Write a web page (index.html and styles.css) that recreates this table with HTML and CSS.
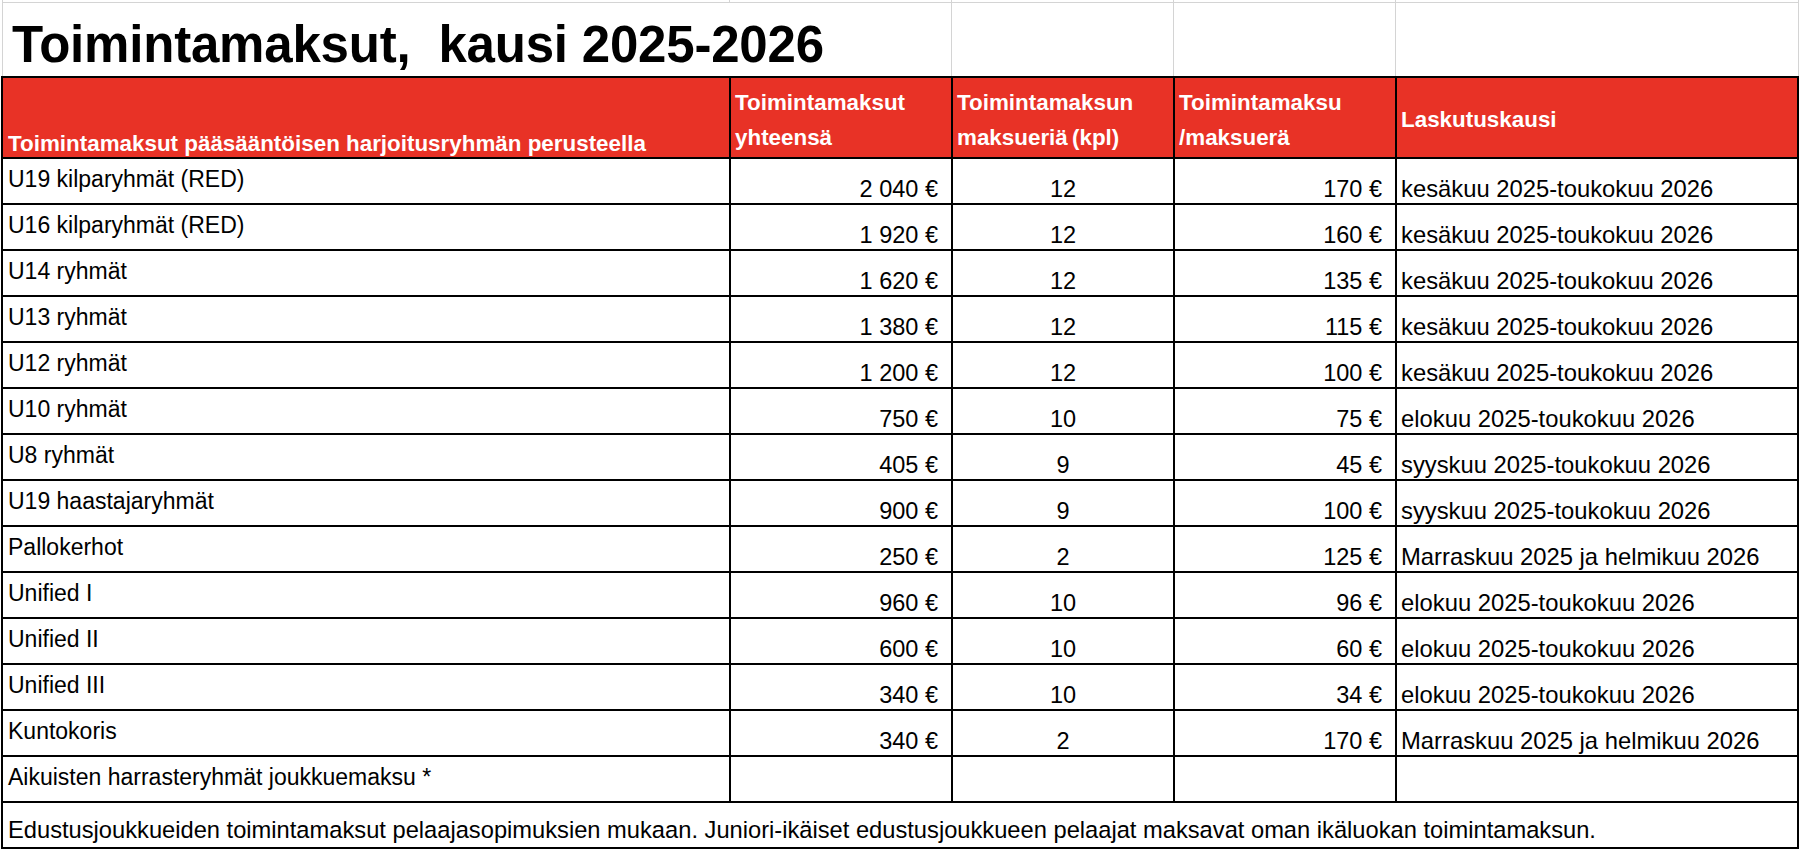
FILE: index.html
```html
<!DOCTYPE html>
<html lang="fi">
<head>
<meta charset="utf-8">
<title>Toimintamaksut, kausi 2025-2026</title>
<link rel="stylesheet" href="styles.css">
</head>
<body>
<div class="sheet">
  <div class="top">
    <div class="gc sliver"></div>
    <div class="gc sliver"></div>
    <div class="gc sliver"></div>
    <div class="gc sliver"></div>
    <div class="gc sliver last"></div>
    <div class="gc title"><h1>Toimintamaksut,&nbsp; kausi 2025-2026</h1></div>
    <div class="gc"></div>
    <div class="gc"></div>
    <div class="gc last"></div>
  </div>
  <div class="grid">
    <div class="c h h1c">Toimintamaksut pääsääntöisen harjoitusryhmän perusteella</div>
    <div class="c h h2">Toimintamaksut<br>yhteensä</div>
    <div class="c h h2">Toimintamaksun<br>maksueriä (kpl)</div>
    <div class="c h h2">Toimintamaksu<br>/maksuerä</div>
    <div class="c h h5">Laskutuskausi</div>

    <div class="c lbl">U19 kilparyhmät (RED)</div><div class="c num">2&nbsp;040&nbsp;€</div><div class="c cnt">12</div><div class="c num">170&nbsp;€</div><div class="c per">kesäkuu 2025-toukokuu 2026</div>
    <div class="c lbl">U16 kilparyhmät (RED)</div><div class="c num">1&nbsp;920&nbsp;€</div><div class="c cnt">12</div><div class="c num">160&nbsp;€</div><div class="c per">kesäkuu 2025-toukokuu 2026</div>
    <div class="c lbl">U14 ryhmät</div><div class="c num">1&nbsp;620&nbsp;€</div><div class="c cnt">12</div><div class="c num">135&nbsp;€</div><div class="c per">kesäkuu 2025-toukokuu 2026</div>
    <div class="c lbl">U13 ryhmät</div><div class="c num">1&nbsp;380&nbsp;€</div><div class="c cnt">12</div><div class="c num">115&nbsp;€</div><div class="c per">kesäkuu 2025-toukokuu 2026</div>
    <div class="c lbl">U12 ryhmät</div><div class="c num">1&nbsp;200&nbsp;€</div><div class="c cnt">12</div><div class="c num">100&nbsp;€</div><div class="c per">kesäkuu 2025-toukokuu 2026</div>
    <div class="c lbl">U10 ryhmät</div><div class="c num">750&nbsp;€</div><div class="c cnt">10</div><div class="c num">75&nbsp;€</div><div class="c per">elokuu 2025-toukokuu 2026</div>
    <div class="c lbl">U8 ryhmät</div><div class="c num">405&nbsp;€</div><div class="c cnt">9</div><div class="c num">45&nbsp;€</div><div class="c per">syyskuu 2025-toukokuu 2026</div>
    <div class="c lbl">U19 haastajaryhmät</div><div class="c num">900&nbsp;€</div><div class="c cnt">9</div><div class="c num">100&nbsp;€</div><div class="c per">syyskuu 2025-toukokuu 2026</div>
    <div class="c lbl">Pallokerhot</div><div class="c num">250&nbsp;€</div><div class="c cnt">2</div><div class="c num">125&nbsp;€</div><div class="c per">Marraskuu 2025 ja helmikuu 2026</div>
    <div class="c lbl">Unified I</div><div class="c num">960&nbsp;€</div><div class="c cnt">10</div><div class="c num">96&nbsp;€</div><div class="c per">elokuu 2025-toukokuu 2026</div>
    <div class="c lbl">Unified II</div><div class="c num">600&nbsp;€</div><div class="c cnt">10</div><div class="c num">60&nbsp;€</div><div class="c per">elokuu 2025-toukokuu 2026</div>
    <div class="c lbl">Unified III</div><div class="c num">340&nbsp;€</div><div class="c cnt">10</div><div class="c num">34&nbsp;€</div><div class="c per">elokuu 2025-toukokuu 2026</div>
    <div class="c lbl">Kuntokoris</div><div class="c num">340&nbsp;€</div><div class="c cnt">2</div><div class="c num">170&nbsp;€</div><div class="c per">Marraskuu 2025 ja helmikuu 2026</div>
    <div class="c lbl">Aikuisten harrasteryhmät joukkuemaksu *</div><div class="c"></div><div class="c"></div><div class="c"></div><div class="c"></div>

    <div class="c foot">Edustusjoukkueiden toimintamaksut pelaajasopimuksien mukaan. Juniori-ikäiset edustusjoukkueen pelaajat maksavat oman ikäluokan toimintamaksun.</div>
  </div>
</div>
</body>
</html>
```

FILE: styles.css
```css
html, body {
  margin: 0;
  padding: 0;
  background: #ffffff;
}

body {
  width: 1802px;
  height: 854px;
  overflow: hidden;
  font-family: "Liberation Sans", Arial, sans-serif;
  color: #000000;
}

.sheet {
  display: flex;
  flex-direction: column;
}

/* Spreadsheet area above the table: light grey gridlines */
.top {
  display: grid;
  grid-template-columns: 727px 222px 222px 222px 404px;
  grid-template-rows: 3px 73px;
  margin-left: 2px;
  width: 1797px;
}

.gc {
  box-sizing: border-box;
  border-left: 1px solid #d4d4d4;
}

.gc.last {
  border-right: 1px solid #d4d4d4;
}

.gc.sliver {
  border-bottom: 1px solid #d4d4d4;
}

.title {
  grid-column: 1 / 3;
  display: flex;
  align-items: flex-end;
  padding: 0 0 3px 9px;
}

.title h1 {
  margin: 0;
  font-family: "Liberation Sans", Arial, sans-serif;
  font-weight: 700;
  font-size: 51px;
  line-height: 57px;
  letter-spacing: -0.2px;
  white-space: nowrap;
}

/* The bordered table */
.grid {
  display: grid;
  grid-template-columns: 726px 220px 220px 220px 400px;
  grid-template-rows: 79px repeat(15, 44px);
  gap: 2px;
  padding: 2px;
  margin-left: 1px;
  width: 1794px;
  background: #000000;
}

.c {
  background: #ffffff;
  display: flex;
  box-sizing: border-box;
  font-size: 23px;
  line-height: 26px;
  white-space: nowrap;
  overflow: hidden;
}

.h {
  background: #e83226;
  color: #ffffff;
  font-weight: 700;
  font-size: 22.4px;
}

.h1c {
  align-items: flex-end;
  padding: 0 4px 0 5px;
  line-height: 26px;
}

.h2 {
  display: block;
  line-height: 35px;
  padding: 7px 4px 0 4px;
  word-spacing: -2px;
}

.h5 {
  display: block;
  line-height: 35px;
  padding: 24px 4px 0 4px;
}

.lbl {
  align-items: flex-start;
  padding: 7px 4px 0 5px;
}

.num {
  justify-content: flex-end;
  align-items: flex-end;
  padding: 0 13px 1px 4px;
  font-size: 23.5px;
}

.cnt {
  justify-content: center;
  align-items: flex-end;
  padding: 0 0 1px 0;
  font-size: 23.5px;
}

.per {
  align-items: flex-end;
  padding: 0 4px 1px 4px;
  font-size: 23.8px;
}

.foot {
  grid-column: 1 / -1;
  align-items: flex-end;
  padding: 0 5px 4px 5px;
  font-size: 23.7px;
}
```
